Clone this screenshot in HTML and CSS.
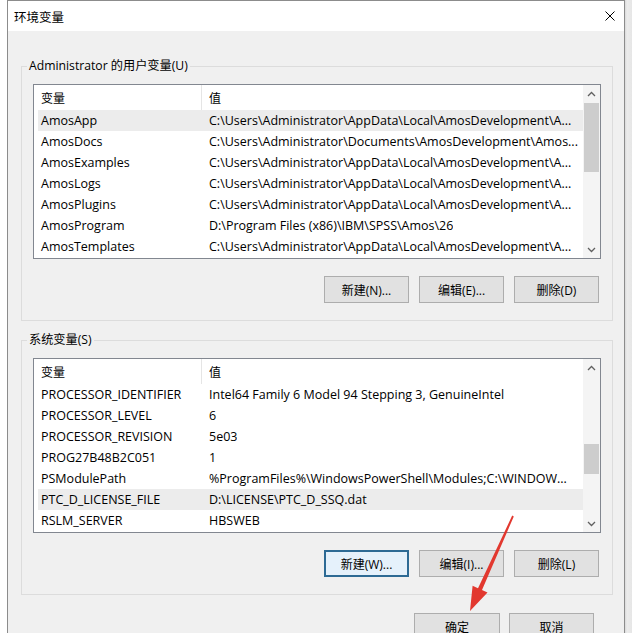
FILE: index.html
```html
<!DOCTYPE html>
<html lang="zh">
<head>
<meta charset="utf-8">
<title>环境变量</title>
<link rel="stylesheet" href="styles.css">
</head>
<body>
<div class="screen">
  <div class="window">
    <div class="titlebar">
      <span class="title">环境变量</span>
      <svg class="close" width="10" height="10" viewBox="0 0 10 10"><path d="M0.5 0.5 L9.5 9.5 M9.5 0.5 L0.5 9.5" stroke="#000" stroke-width="1" fill="none"/></svg>
    </div>
    <div class="content">
      <fieldset class="group">
        <legend>Administrator 的用户变量(U)</legend>
        <div class="listbox">
          <div class="list">
            <div class="hdr"><div class="c1">变量</div><div class="c2">值</div></div>
            <div class="rows">
              <div class="row sel"><div class="c1">AmosApp</div><div class="c2">C:\Users\Administrator\AppData\Local\AmosDevelopment\A...</div></div>
              <div class="row"><div class="c1">AmosDocs</div><div class="c2">C:\Users\Administrator\Documents\AmosDevelopment\Amos...</div></div>
              <div class="row"><div class="c1">AmosExamples</div><div class="c2">C:\Users\Administrator\AppData\Local\AmosDevelopment\A...</div></div>
              <div class="row"><div class="c1">AmosLogs</div><div class="c2">C:\Users\Administrator\AppData\Local\AmosDevelopment\A...</div></div>
              <div class="row"><div class="c1">AmosPlugins</div><div class="c2">C:\Users\Administrator\AppData\Local\AmosDevelopment\A...</div></div>
              <div class="row"><div class="c1">AmosProgram</div><div class="c2">D:\Program Files (x86)\IBM\SPSS\Amos\26</div></div>
              <div class="row"><div class="c1">AmosTemplates</div><div class="c2">C:\Users\Administrator\AppData\Local\AmosDevelopment\A...</div></div>
            </div>
          </div>
          <div class="scrollbar">
            <div class="sb-arrow"><svg width="9" height="6" viewBox="0 0 9 6"><path d="M1 5 L4.5 1.5 L8 5" stroke="#606060" stroke-width="1.3" fill="none"/></svg></div>
            <div class="track"><div class="thumb thumb-user"></div></div>
            <div class="sb-arrow"><svg width="9" height="6" viewBox="0 0 9 6"><path d="M1 1 L4.5 4.5 L8 1" stroke="#606060" stroke-width="1.3" fill="none"/></svg></div>
          </div>
        </div>
        <div class="btns">
          <button class="btn">新建(N)...</button>
          <button class="btn">编辑(E)...</button>
          <button class="btn">删除(D)</button>
        </div>
      </fieldset>

      <fieldset class="group group-sys">
        <legend>系统变量(S)</legend>
        <div class="listbox">
          <div class="list">
            <div class="hdr"><div class="c1">变量</div><div class="c2">值</div></div>
            <div class="rows">
              <div class="row"><div class="c1">PROCESSOR_IDENTIFIER</div><div class="c2">Intel64 Family 6 Model 94 Stepping 3, GenuineIntel</div></div>
              <div class="row"><div class="c1">PROCESSOR_LEVEL</div><div class="c2">6</div></div>
              <div class="row"><div class="c1">PROCESSOR_REVISION</div><div class="c2">5e03</div></div>
              <div class="row"><div class="c1">PROG27B48B2C051</div><div class="c2">1</div></div>
              <div class="row"><div class="c1">PSModulePath</div><div class="c2">%ProgramFiles%\WindowsPowerShell\Modules;C:\WINDOW...</div></div>
              <div class="row sel"><div class="c1">PTC_D_LICENSE_FILE</div><div class="c2">D:\LICENSE\PTC_D_SSQ.dat</div></div>
              <div class="row"><div class="c1">RSLM_SERVER</div><div class="c2">HBSWEB</div></div>
            </div>
          </div>
          <div class="scrollbar">
            <div class="sb-arrow"><svg width="9" height="6" viewBox="0 0 9 6"><path d="M1 5 L4.5 1.5 L8 5" stroke="#606060" stroke-width="1.3" fill="none"/></svg></div>
            <div class="track"><div class="thumb thumb-sys"></div></div>
            <div class="sb-arrow"><svg width="9" height="6" viewBox="0 0 9 6"><path d="M1 1 L4.5 4.5 L8 1" stroke="#606060" stroke-width="1.3" fill="none"/></svg></div>
          </div>
        </div>
        <div class="btns">
          <button class="btn focus">新建(W)...</button>
          <button class="btn">编辑(I)...</button>
          <button class="btn">删除(L)</button>
        </div>
      </fieldset>

      <div class="dlg-btns">
        <button class="btn btn-ok">确定</button>
        <button class="btn">取消</button>
      </div>
    </div>
  </div>
  <div class="shade"></div>
</div>
<svg class="annot" width="632" height="633" viewBox="0 0 632 633">
  <polygon points="512.2,515.6 513.8,516.4 482,590.1 487.5,592.6 470,611 472.6,585.8 478,588.3" fill="#e2382f"/>
</svg>
</body>
</html>
```

FILE: styles.css
```css
* { box-sizing: border-box; }

html, body {
  margin: 0;
  padding: 0;
}

body {
  background: #ffffff;
  font-family: "Open Sans", "Noto Sans CJK SC", sans-serif;
  font-size: 12px;
  color: #000;
  width: 632px;
  height: 633px;
  overflow: hidden;
  position: relative;
}

.screen {
  display: flex;
  height: 633px;
  padding-left: 7px;
}

.window {
  width: 618px;
  border: 1px solid #8c8c8c;
  border-bottom: none;
  background: #f0f0f0;
  display: flex;
  flex-direction: column;
}

.shade {
  flex: 1;
  background: linear-gradient(to right, #d9d9d9 0, #ececec 2px, #e6e6e6 100%);
}

.titlebar {
  height: 30px;
  background: #fff;
  display: flex;
  align-items: center;
  justify-content: space-between;
  padding: 0 9px 0 6px;
  flex: none;
}

.title {
  font-size: 12.5px;
}

.content {
  padding: 27px 11px 0 13px;
}

.group {
  margin: 0;
  border: 1px solid #dcdcdc;
  padding: 10px 11px 17px 11px;
  min-width: 0;
}

.group-sys {
  margin-top: 11px;
}

.group legend {
  padding: 0 2px;
  margin-left: -6px;
  line-height: 16px;
  font-size: 12.2px;
}

.listbox {
  display: flex;
  border: 1px solid #828790;
  background: #fff;
  height: 175px;
}

.list {
  flex: 1;
  min-width: 0;
}

.hdr {
  display: flex;
  height: 25px;
}

.hdr .c1 {
  width: 168px;
  padding-left: 7px;
  border-right: 1px solid #e5e5e5;
  display: flex;
  align-items: center;
}

.hdr .c2 {
  padding-left: 7px;
  display: flex;
  align-items: center;
}

.rows {
  padding-left: 4px;
}

.row {
  display: flex;
  height: 21px;
  align-items: center;
  white-space: nowrap;
  font-size: 12.5px;
}

.row.sel {
  background: #ececec;
}

.row .c1 {
  width: 164px;
  padding-left: 3px;
  flex: none;
}

.row .c2 {
  padding-left: 7px;
  overflow: hidden;
}

.scrollbar {
  width: 17px;
  flex: none;
  display: flex;
  flex-direction: column;
  background: #f4f4f4;
}

.sb-arrow {
  height: 17px;
  display: flex;
  align-items: center;
  justify-content: center;
  flex: none;
}

.track {
  flex: 1;
}

.thumb {
  margin: 0 1px;
  background: #cdcdcd;
}

.thumb-user {
  margin-top: 1px;
  height: 69px;
}

.thumb-sys {
  margin-top: 68px;
  height: 30px;
}

.btns {
  display: flex;
  justify-content: flex-end;
  gap: 10px;
  margin-top: 17px;
  padding-right: 2px;
}

.btn {
  width: 85px;
  height: 27px;
  border: 1px solid #adadad;
  background: #e1e1e1;
  font-family: inherit;
  font-size: 12px;
  color: #000;
  padding: 0;
  margin: 0;
}

.btn.focus {
  border: 2px solid #2d6a94;
  background: #e5f1fb;
}

.dlg-btns {
  display: flex;
  justify-content: flex-end;
  gap: 9px;
  margin-top: 18px;
  padding-right: 19px;
}

.btn-ok {
  width: 86px;
}

.annot {
  position: absolute;
  left: 0;
  top: 0;
  pointer-events: none;
}
```
